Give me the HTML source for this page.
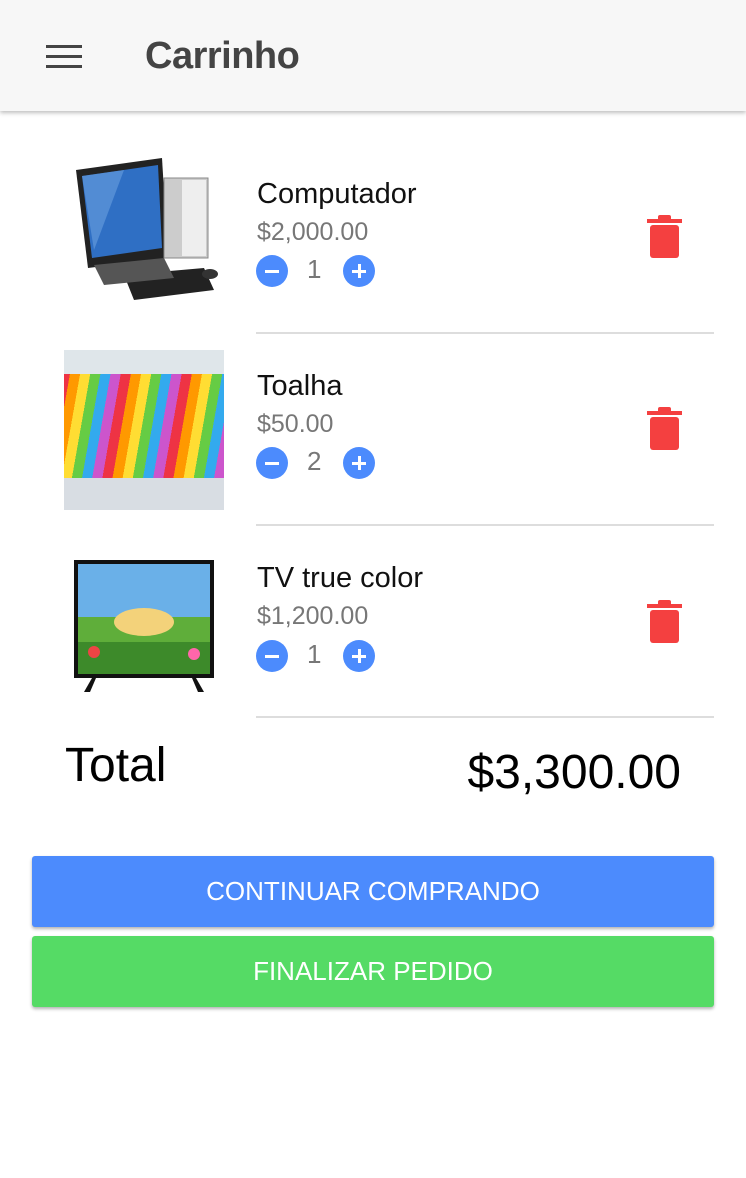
<!DOCTYPE html>
<html><head><meta charset="utf-8"><style>
body{margin:0;width:746px;height:1178px;background:#fff;font-family:"Liberation Sans",sans-serif;position:relative;overflow:hidden}
.hdr{position:absolute;left:0;top:0;width:746px;height:111px;background:#f7f7f7;box-shadow:0 2px 4px rgba(0,0,0,.25)}
.bar{position:absolute;left:46px;width:36px;height:3px;background:#444}
.title{position:absolute;left:145px;top:35px;font-size:38px;color:#444;font-weight:bold;letter-spacing:-0.5px}
.img{position:absolute;left:64px;width:160px;height:160px}
.name{position:absolute;left:257px;font-size:29px;color:#111}
.price{position:absolute;left:257px;font-size:25px;color:#777}
.btn{position:absolute;width:32px;height:32px;border-radius:50%;background:#4c8bfd}
.btn:before{content:"";position:absolute;left:9px;top:14.5px;width:14px;height:3px;background:#fff}
.plus:after{content:"";position:absolute;left:14.5px;top:9px;width:3px;height:14px;background:#fff}
.qty{position:absolute;left:307px;font-size:26px;color:#777}
.div{position:absolute;left:256px;width:458px;height:2px;background:#ddd}
.trash{position:absolute;left:647px}
.b{position:absolute;left:32px;width:682px;height:71px;border-radius:3px;color:#fff;font-size:26px;text-align:center;line-height:71px;box-shadow:0 2px 3px rgba(0,0,0,.3)}
</style></head><body>
<div class="hdr">
<div class="bar" style="top:45px"></div><div class="bar" style="top:55px"></div><div class="bar" style="top:65px"></div>
<div class="title">Carrinho</div>
</div>

<svg class="img" style="top:150px" viewBox="0 0 160 160">
<polygon points="12,20 98,8 104,108 24,118" fill="#222"/>
<polygon points="18,26 94,15 98,98 28,108" fill="#2f6fc4"/>
<polygon points="18,26 60,20 30,100" fill="#6aa0e0" opacity=".6"/>
<rect x="100" y="28" width="44" height="80" fill="#ccc" stroke="#888"/>
<rect x="118" y="30" width="24" height="76" fill="#eee"/>
<polygon points="60,125 140,118 150,140 70,150" fill="#222"/>
<ellipse cx="146" cy="124" rx="8" ry="5" fill="#333"/>
<polygon points="30,115 100,108 110,128 40,135" fill="#555"/>
</svg>
<div class="name" style="top:178px">Computador</div>
<div class="price" style="top:218px">$2,000.00</div>
<div class="btn" style="left:256px;top:255px"></div>
<div class="qty" style="top:254px">1</div>
<div class="btn plus" style="left:343px;top:255px"></div>
<svg class="trash" style="top:215px" width="35" height="43" viewBox="0 0 35 43"><rect x="0" y="4" width="35" height="4" fill="#f44040"/><rect x="11" y="0" width="13" height="6" rx="2" fill="#f44040"/><rect x="3" y="10" width="29" height="33" rx="3" fill="#f44040"/></svg>
<div class="div" style="top:332px"></div>

<div class="img" style="top:350px;background:linear-gradient(180deg,#dfe6ea 0%,#dfe6ea 15%,transparent 15%,transparent 80%,#d8dde3 80%),repeating-linear-gradient(100deg,#e34 0 10px,#f90 10px 20px,#fd3 20px 30px,#6c4 30px 40px,#3ae 40px 50px,#c5c 50px 60px);"></div>
<div class="name" style="top:370px">Toalha</div>
<div class="price" style="top:410px">$50.00</div>
<div class="btn" style="left:256px;top:447px"></div>
<div class="qty" style="top:446px">2</div>
<div class="btn plus" style="left:343px;top:447px"></div>
<svg class="trash" style="top:407px" width="35" height="43" viewBox="0 0 35 43"><rect x="0" y="4" width="35" height="4" fill="#f44040"/><rect x="11" y="0" width="13" height="6" rx="2" fill="#f44040"/><rect x="3" y="10" width="29" height="33" rx="3" fill="#f44040"/></svg>
<div class="div" style="top:524px"></div>

<svg class="img" style="top:542px" viewBox="0 0 160 160">
<rect x="10" y="18" width="140" height="118" fill="#111"/>
<rect x="14" y="22" width="132" height="110" fill="#6ab0e8"/>
<rect x="14" y="75" width="132" height="57" fill="#5fae3a"/>
<ellipse cx="80" cy="80" rx="30" ry="14" fill="#f3d27a"/>
<rect x="14" y="100" width="132" height="32" fill="#3d8a2a"/>
<circle cx="30" cy="110" r="6" fill="#e44"/><circle cx="130" cy="112" r="6" fill="#f6a"/>
<polygon points="20,150 28,136 32,136 26,150" fill="#111"/><polygon points="140,150 132,136 128,136 134,150" fill="#111"/>
</svg>
<div class="name" style="top:562px">TV true color</div>
<div class="price" style="top:602px">$1,200.00</div>
<div class="btn" style="left:256px;top:640px"></div>
<div class="qty" style="top:639px">1</div>
<div class="btn plus" style="left:343px;top:640px"></div>
<svg class="trash" style="top:600px" width="35" height="43" viewBox="0 0 35 43"><rect x="0" y="4" width="35" height="4" fill="#f44040"/><rect x="11" y="0" width="13" height="6" rx="2" fill="#f44040"/><rect x="3" y="10" width="29" height="33" rx="3" fill="#f44040"/></svg>
<div class="div" style="top:716px"></div>

<div style="position:absolute;left:65px;top:738px;font-size:48px;color:#000">Total</div>
<div style="position:absolute;right:65px;top:745px;font-size:48px;color:#000">$3,300.00</div>

<div class="b" style="top:856px;background:#4c8bfd">CONTINUAR COMPRANDO</div>
<div class="b" style="top:936px;background:#55db65">FINALIZAR PEDIDO</div>
</body></html>
